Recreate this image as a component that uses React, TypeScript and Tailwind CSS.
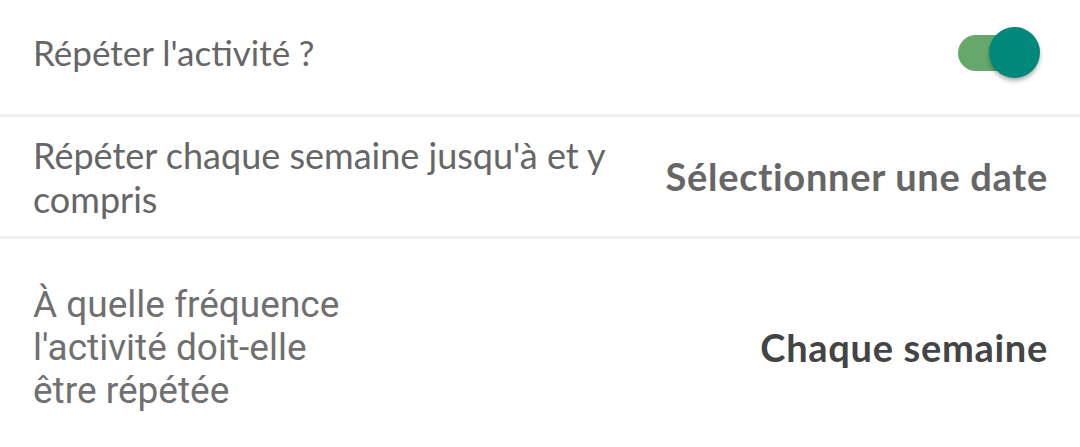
import React from "react";

export default function App() {
  return (
    <div className="w-[1080px] h-[447px] overflow-hidden bg-white" style={{ fontFamily: "Lato, sans-serif" }}>
      <div className="flex h-[117px] items-center justify-between border-b-[3px] border-[#efefef] pb-[10px] pl-[33px] pr-[40px]">
        <span className="text-[35px] text-[#666666] font-[Lato]">Répéter l'activité{"\u202F"}?</span>
        <div className="relative h-[51px] w-[82px]">
          <div className="absolute left-0 top-[8px] h-[36px] w-[60px] rounded-full bg-[#66a86b]" />
          <div className="absolute right-0 top-0 h-[51px] w-[51px] rounded-full bg-[#00897b] shadow-[0_3px_4px_rgba(0,0,0,0.3)]" />
        </div>
      </div>
      <div className="flex h-[122px] items-center justify-between border-b-[3px] border-[#efefef] pl-[33px] pr-[32px]">
        <span className="w-[600px] text-[36px] leading-[44px] text-[#666666] font-[Lato]">
          Répéter chaque semaine jusqu'à et y compris
        </span>
        <span className="text-[38px] font-bold tracking-[0.7px] text-[#666666] font-[Lato]">Sélectionner une date</span>
      </div>
      <div className="flex h-[216px] items-center justify-between pl-[33px] pr-[32px]">
        <span className="w-[340px] text-[37px] leading-[43px] text-[#707070] font-[Roboto]">
          À quelle fréquence l'activité doit-elle être répétée
        </span>
        <span className="text-[38px] font-bold tracking-[0.7px] text-[#444444] font-[Lato]">Chaque semaine</span>
      </div>
    </div>
  );
}
